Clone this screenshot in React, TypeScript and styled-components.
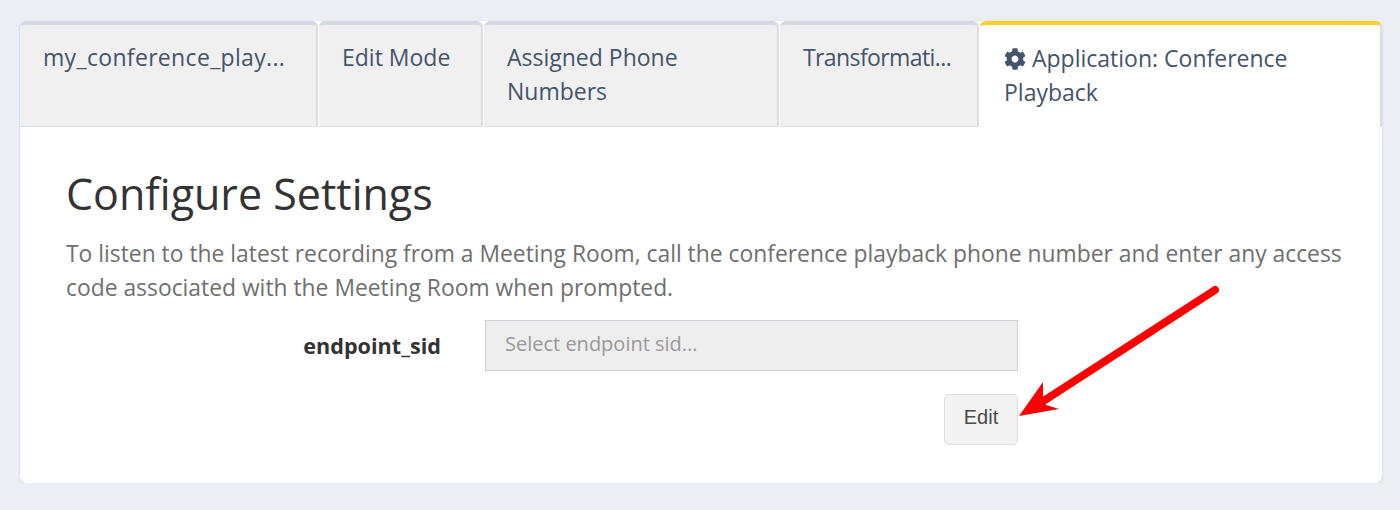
import styled, { createGlobalStyle } from "styled-components";
import { FaCog } from "react-icons/fa";

const GlobalStyle = createGlobalStyle`
    body {
        margin: 0;
        background: #ebeef3;
        font-family: "Open Sans", "Lato", sans-serif;
    }
`;

const Page = styled.div`
    padding: 21px 18px 0 20px;
`;

const Card = styled.div`
    position: relative;
    height: 462px;
    box-sizing: border-box;
    background: #fff;
    border-radius: 6px;
    box-shadow: 0 1px 2px rgba(60, 70, 90, 0.25);
`;

const TabBar = styled.div`
    display: flex;
    height: 106px;
    gap: 1px;
`;

const Tab = styled.div<{ $width: number; $active?: boolean; $tracking?: number }>`
    box-sizing: border-box;
    width: ${(p) => p.$width}px;
    padding: ${(p) => (p.$active ? "16px 23px 0 24px" : "15px 23px 0 23px")};
    border-top: 4px solid ${(p) => (p.$active ? "#ffcd2e" : "#d5d9e3")};
    border-right: 2px solid #dcdde0;
    border-bottom: ${(p) => (p.$active ? "none" : "1px solid #dfe0e3")};
    border-radius: 6px 6px 0 0;
    background: ${(p) => (p.$active ? "#fff" : "#f0f0f1")};
    color: #44546a;
    font-size: 23px;
    line-height: 34px;
    letter-spacing: ${(p) => p.$tracking ?? 0}px;
`;

const TabIcon = styled(FaCog)`
    width: 22px;
    height: 22px;
    vertical-align: -3px;
    margin-right: 6px;
`;

const Content = styled.div`
    padding: 42px 38px 0 46px;
`;

const Title = styled.h1`
    margin: 0;
    color: #333;
    font-size: 43px;
    line-height: 50px;
    font-weight: 400;
`;

const Description = styled.p`
    margin: 18px 0 0;
    color: #6f6f6f;
    font-size: 22.85px;
    line-height: 34px;
`;

const FieldRow = styled.div`
    display: flex;
    align-items: center;
    margin-top: 15px;
`;

const FieldLabel = styled.label`
    width: 419px;
    padding-right: 44px;
    box-sizing: border-box;
    text-align: right;
    color: #333;
    font-size: 21.6px;
    font-weight: 700;
`;

const SelectBox = styled.div`
    box-sizing: border-box;
    width: 533px;
    height: 51px;
    padding: 0 19px 4px;
    display: flex;
    align-items: center;
    background: #eeeeee;
    border: 1px solid #ccd0dc;
    color: #999;
    font-size: 20px;
`;

const ActionRow = styled.div`
    display: flex;
    justify-content: flex-end;
    width: 952px;
    margin-top: 23px;
`;

const EditButton = styled.button`
    box-sizing: border-box;
    width: 74px;
    height: 51px;
    padding: 0 0 4px;
    background: #f3f3f3;
    border: 1px solid #dddddd;
    border-radius: 5px;
    color: #4a4a4a;
    font-family: "Liberation Sans", Arial, sans-serif;
    font-size: 20px;
`;

const Arrow = styled.svg`
    position: absolute;
    left: 980px;
    top: 250px;
    width: 240px;
    height: 160px;
`;

const tabs = [
    { label: "my_conference_play...", width: 298, tracking: 0.33 },
    { label: "Edit Mode", width: 164 },
    { label: "Assigned Phone Numbers", width: 295 },
    { label: "Transformati...", width: 199, tracking: -0.6 },
];

const App = () => {
    return (
        <>
            <GlobalStyle />
            <Page>
                <Card>
                    <TabBar>
                        {tabs.map((tab) => (
                            <Tab key={tab.label} $width={tab.width} $tracking={tab.tracking}>
                                {tab.label}
                            </Tab>
                        ))}
                        <Tab $width={402} $active>
                            <TabIcon />
                            Application: Conference Playback
                        </Tab>
                    </TabBar>
                    <Content>
                        <Title>Configure Settings</Title>
                        <Description>
                            To listen to the latest recording from a Meeting Room, call the conference playback phone
                            number and enter any access code associated with the Meeting Room when prompted.
                        </Description>
                        <FieldRow>
                            <FieldLabel>endpoint_sid</FieldLabel>
                            <SelectBox>Select endpoint sid...</SelectBox>
                        </FieldRow>
                        <ActionRow>
                            <EditButton>Edit</EditButton>
                        </ActionRow>
                    </Content>
                    <Arrow viewBox="0 0 240 160">
                        <path d="M215 19 L45 129" stroke="#ff0000" strokeWidth="8" strokeLinecap="round" fill="none" />
                        <path d="M19 145 L43 111 L43 126 L46 134 L59 138 Z" fill="#ff0000" />
                    </Arrow>
                </Card>
            </Page>
        </>
    );
};

export default App;
